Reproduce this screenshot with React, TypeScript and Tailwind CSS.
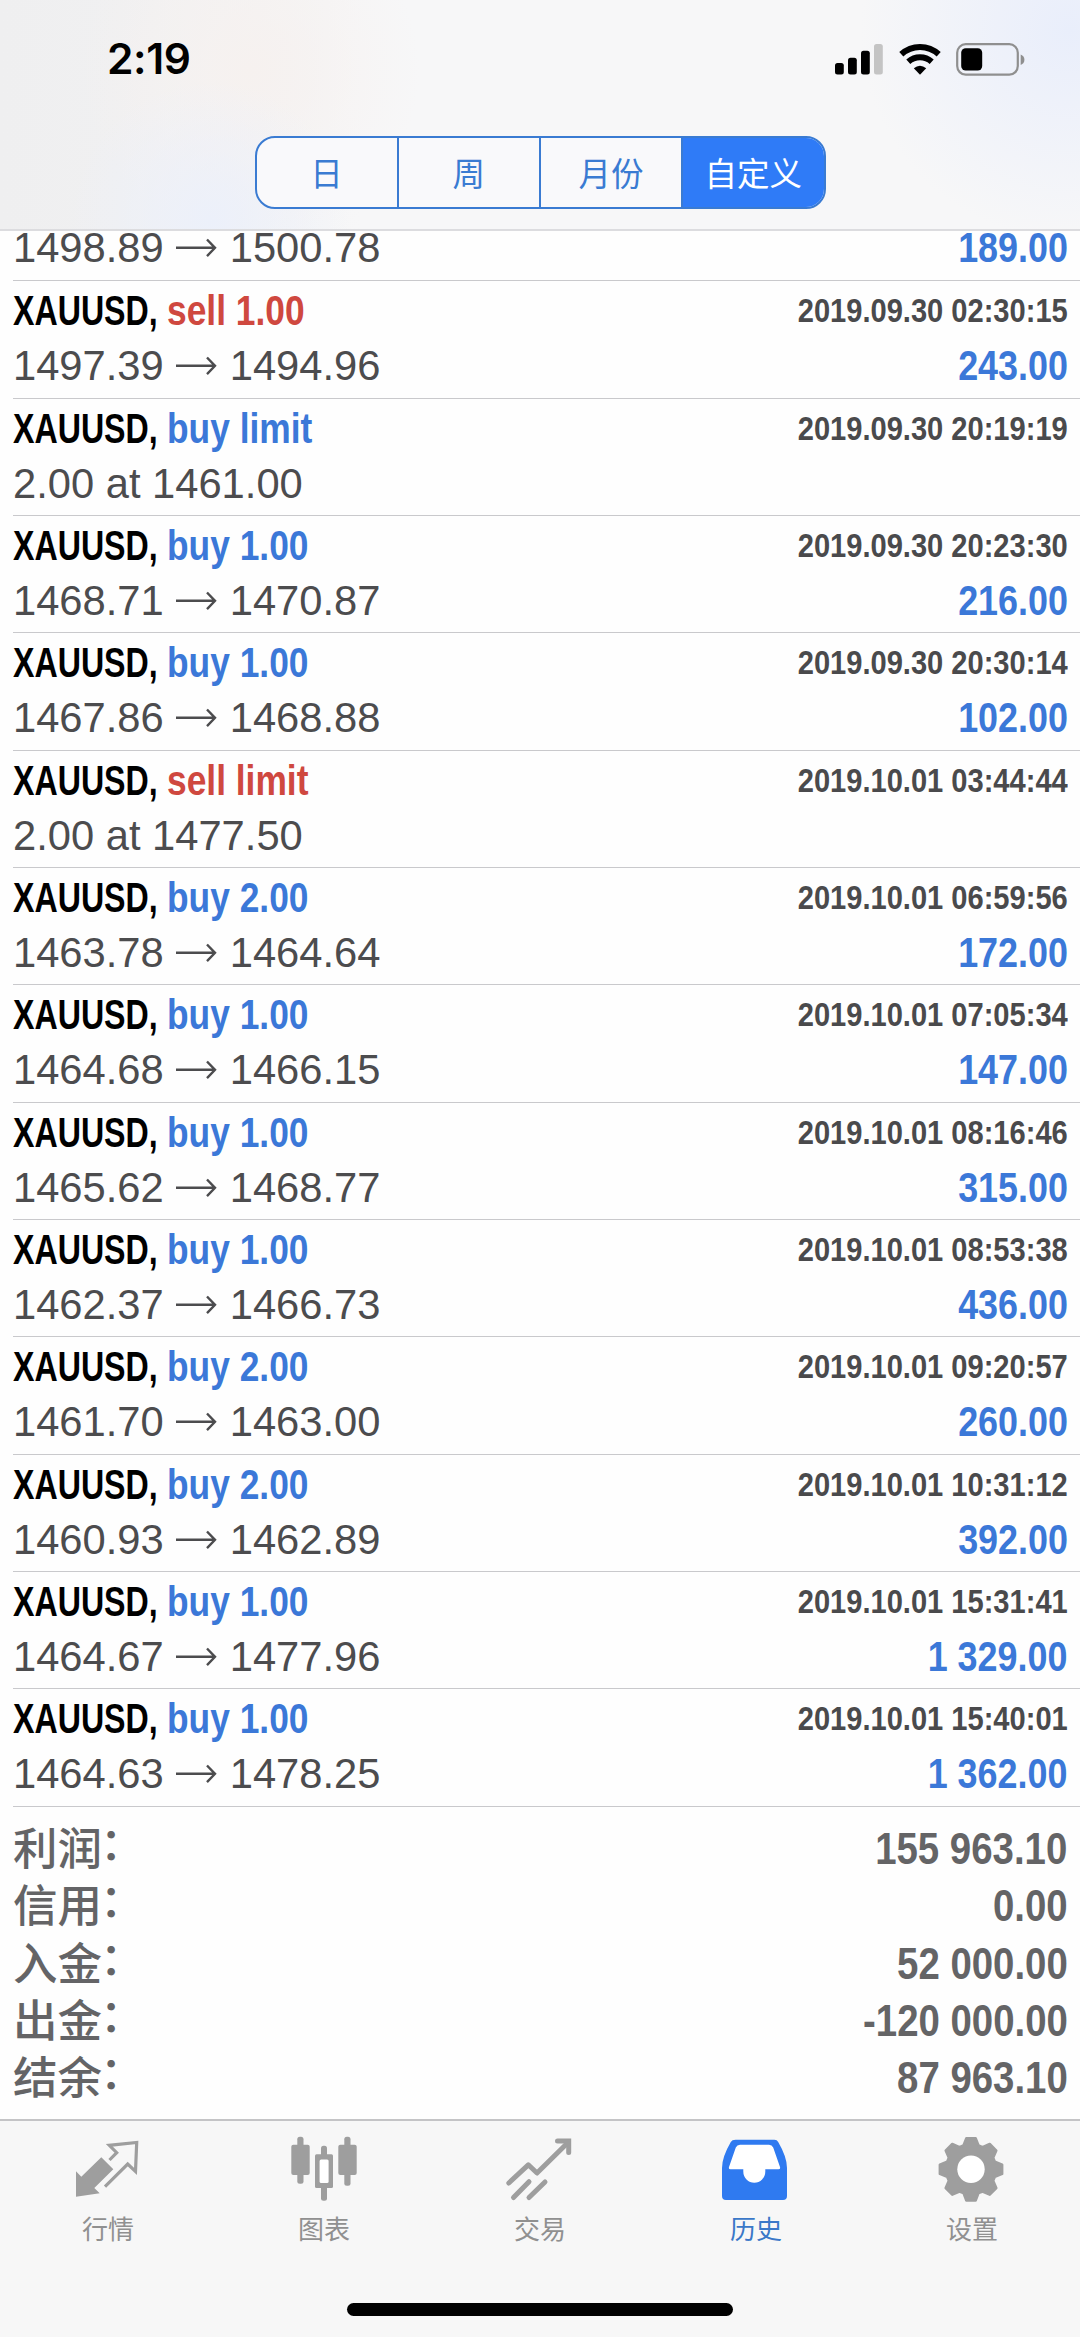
import React from 'react';
import { clsx } from 'clsx';

interface Deal {
  side: 'buy' | 'sell';
  label: string;
  time: string;
  open?: string;
  close?: string;
  order?: string;
  profit?: string;
}

const DEALS: Deal[] = [
  { side: 'sell', label: 'sell 1.00', time: '2019.09.30 02:30:15', open: '1497.39', close: '1494.96', profit: '243.00' },
  { side: 'buy', label: 'buy limit', time: '2019.09.30 20:19:19', order: '2.00 at 1461.00' },
  { side: 'buy', label: 'buy 1.00', time: '2019.09.30 20:23:30', open: '1468.71', close: '1470.87', profit: '216.00' },
  { side: 'buy', label: 'buy 1.00', time: '2019.09.30 20:30:14', open: '1467.86', close: '1468.88', profit: '102.00' },
  { side: 'sell', label: 'sell limit', time: '2019.10.01 03:44:44', order: '2.00 at 1477.50' },
  { side: 'buy', label: 'buy 2.00', time: '2019.10.01 06:59:56', open: '1463.78', close: '1464.64', profit: '172.00' },
  { side: 'buy', label: 'buy 1.00', time: '2019.10.01 07:05:34', open: '1464.68', close: '1466.15', profit: '147.00' },
  { side: 'buy', label: 'buy 1.00', time: '2019.10.01 08:16:46', open: '1465.62', close: '1468.77', profit: '315.00' },
  { side: 'buy', label: 'buy 1.00', time: '2019.10.01 08:53:38', open: '1462.37', close: '1466.73', profit: '436.00' },
  { side: 'buy', label: 'buy 2.00', time: '2019.10.01 09:20:57', open: '1461.70', close: '1463.00', profit: '260.00' },
  { side: 'buy', label: 'buy 2.00', time: '2019.10.01 10:31:12', open: '1460.93', close: '1462.89', profit: '392.00' },
  { side: 'buy', label: 'buy 1.00', time: '2019.10.01 15:31:41', open: '1464.67', close: '1477.96', profit: '1 329.00' },
  { side: 'buy', label: 'buy 1.00', time: '2019.10.01 15:40:01', open: '1464.63', close: '1478.25', profit: '1 362.00' },
];

const SUMMARY = [
  { label: '利润', value: '155 963.10' },
  { label: '信用', value: '0.00' },
  { label: '入金', value: '52 000.00' },
  { label: '出金', value: '-120 000.00' },
  { label: '结余', value: '87 963.10' },
];

const PERIODS = ['日', '周', '月份', '自定义'];

const rad = (deg: number) => (deg * Math.PI) / 180;

// Eight teeth, four points per tooth
const GEAR_POINTS = Array.from({ length: 8 }, (_, i) =>
  [[-17.5, 25], [-8.5, 31.5], [8.5, 31.5], [17.5, 25]]
    .map(([a, r]) => `${(32 + r * Math.sin(rad(i * 45 + a))).toFixed(2)},${(33.3 - r * Math.cos(rad(i * 45 + a))).toFixed(2)}`)
    .join(' ')
).join(' ');

const QuotesIcon = () => (
  <svg viewBox="0 0 66 66" className="size-[66px] overflow-visible">
    <path d="M1 60.7V35.3L6.3 40.7 26.3 21.3 38.3 33.3 19.3 52 24.7 57.3Z" fill="currentColor" />
    <path d="M34.5 24 41.7 16.7 34.3 9.3 61.7 6.5 60.5 35.5 52.7 28 30 50.7" fill="none" stroke="currentColor" strokeWidth="3.2" />
  </svg>
);

const ChartIcon = () => (
  <svg viewBox="0 0 66 66" className="size-[66px] overflow-visible" fill="currentColor">
    <rect x="0.3" y="8.7" width="18.4" height="30.3" rx="2" />
    <rect x="6.3" y="0.7" width="6.2" height="47" rx="2.5" />
    <rect x="24" y="18.3" width="18" height="33.7" rx="1.5" />
    <rect x="30" y="9.7" width="6" height="55" rx="2.5" />
    <rect x="28.6" y="23.5" width="9" height="23.5" rx="1.5" fill="#fff" />
    <rect x="47.3" y="8.7" width="18.4" height="30.3" rx="2" />
    <rect x="53.3" y="0.7" width="6.2" height="49" rx="2.5" />
  </svg>
);

const TradeIcon = () => (
  <svg viewBox="0 0 66 66" className="size-[66px] overflow-visible" fill="none" stroke="currentColor" strokeWidth="5" strokeLinecap="round">
    <path d="M1.8 47 21.3 28.8 30 37 61 6.5" strokeLinejoin="round" />
    <path d="M50.5 5H61.7V16.5M6.5 61.5 22 45.7M22 61.5 38 46" />
  </svg>
);

const HistoryIcon = () => (
  <svg viewBox="0 0 66 66" className="size-[66px] overflow-visible">
    <path d="M12.5 3.8H51.5Q54 3.8 55.2 6Q64 21 64 32V60Q64 64 60 64H3Q-1 64-1 60V32Q-1 21 7.8 6Q9 3.8 12.5 3.8Z" fill="currentColor" />
    <path d="M17 8.7H46Q49 8.7 50.2 11.5L57 31Q57.6 33.3 55.5 33.3H42.3V35.5A11 11.2 0 0 1 20.3 35.5V33.3H7.5Q5.4 33.3 6 31L12.8 11.5Q14 8.7 17 8.7Z" fill="#fff" />
  </svg>
);

const SettingsIcon = () => (
  <svg viewBox="0 0 66 66" className="size-[66px] overflow-visible">
    <polygon points={GEAR_POINTS} fill="currentColor" stroke="currentColor" strokeWidth="2.5" strokeLinejoin="round" />
    <circle cx="32" cy="33.3" r="13.7" fill="#fff" />
  </svg>
);

const TABS = [
  { name: '行情', icon: <QuotesIcon /> },
  { name: '图表', icon: <ChartIcon /> },
  { name: '交易', icon: <TradeIcon /> },
  { name: '历史', icon: <HistoryIcon />, active: true },
  { name: '设置', icon: <SettingsIcon /> },
];

const StatusBar = () => (
  <div className="flex h-[118px] items-center justify-between pr-[55px] pl-[107px]">
    <span className="font-['Inter'] text-[42.5px] font-semibold tracking-[-0.4px] text-black">2:19</span>
    <div className="flex items-center">
      <svg viewBox="0 0 48 33" className="h-[33px] w-12">
        <rect x="0" y="20" width="8.8" height="11.5" rx="2.5" />
        <rect x="13" y="14.7" width="8.8" height="16.8" rx="2.5" />
        <rect x="26" y="7.7" width="8.8" height="23.8" rx="2.5" />
        <rect x="39" y="1" width="8.8" height="30.5" rx="2.5" fill="#c4c4c4" />
      </svg>
      <svg viewBox="0 0 42 33" className="ml-4 h-[33px] w-[42px]" fill="none" stroke="#000" strokeWidth="6">
        <path d="M2.3 11.3A27.5 27.5 0 0 1 39.7 11.3" />
        <path d="M9.3 18.8A17.5 17.5 0 0 1 32.7 18.8" />
        <path d="M21 31.7 14.8 25.3Q21 20.3 27.2 25.3Z" fill="#000" stroke="none" />
      </svg>
      <svg viewBox="0 0 69 33" className="ml-[15px] h-[33px] w-[69px]">
        <rect x="1.2" y="1.2" width="60.6" height="30.4" rx="8.5" fill="none" stroke="#8f8f8f" strokeWidth="2.2" />
        <rect x="5.2" y="5.2" width="21" height="22.4" rx="4.5" />
        <path d="M64.7 11.5Q68.4 13 68.4 16.8T64.7 22Z" fill="#8f8f8f" />
      </svg>
    </div>
  </div>
);

const PriceMove = ({ open, close }: { open?: string; close?: string }) => (
  <span className="flex items-center">
    {open}
    <svg viewBox="0 0 66 34" className="h-[34px] w-[66px]" fill="none" stroke="currentColor" strokeWidth="2.4">
      <path d="M12 16.8H50.5M43 8.5 51 16.8 43 25.1" />
    </svg>
    {close}
  </span>
);

const Profit = ({ value }: { value?: string }) => (
  <span className="origin-right scale-x-[0.845] text-[42.5px] font-bold text-[#3b78d8]">{value}</span>
);

const DealRow = ({ deal }: { deal: Deal }) => (
  <div className="ml-[13px] h-[117.35px] shrink-0 border-b-[1.5px] border-[#c9c9cc] pt-0.5 pr-[12.5px]">
    <div className="flex h-14 justify-between leading-[55px]">
      <div className="flex text-[42.6px] font-bold">
        <span className="w-[154px] text-black">
          <span className="inline-block origin-left scale-x-[0.755]">XAUUSD,</span>
        </span>
        <span className={clsx('origin-left scale-x-[0.83]', deal.side === 'buy' ? 'text-[#3b78d8]' : 'text-[#cf483f]')}>{deal.label}</span>
      </div>
      <span className="origin-right scale-x-[0.855] text-[34px] leading-[54px] font-bold text-[#4a4a4c]">{deal.time}</span>
    </div>
    <div className="flex h-[54px] justify-between text-[41.7px] leading-[54px] text-[#4c4c4e]">
      {deal.order ? <span>{deal.order}</span> : <PriceMove open={deal.open} close={deal.close} />}
      <Profit value={deal.profit} />
    </div>
  </div>
);

export default function App() {
  return (
    <div className="flex h-[2337px] w-[1080px] flex-col overflow-hidden bg-[#fefefe] font-['Liberation_Sans','Noto_Sans_CJK_SC',sans-serif] whitespace-nowrap">
      <header className="h-[231px] shrink-0 border-b-2 border-[#dcdcdf] bg-[#f7f7f8] bg-[radial-gradient(circle_at_210px_220px,#ecf0fa_0,transparent_140px),radial-gradient(circle_at_250px_70px,#f6f1ef_0,transparent_170px),radial-gradient(circle_at_1070px_30px,#e9eefb_0,transparent_210px),linear-gradient(90deg,#efeff0_0,#f0f0f1_120px,#f7f7f8_360px)]">
        <StatusBar />
        <div className="mx-auto mt-[18px] flex h-[73px] w-[571px] overflow-hidden rounded-[20px] border-2 border-[#3a7bd2] bg-[#f9f9fb] font-['Noto_Sans_CJK_SC',sans-serif] text-[32.5px] text-[#3a7bd2]">
          {PERIODS.map((period, i) => (
            <div
              key={period}
              className={clsx(
                'flex flex-1 items-center justify-center',
                i > 0 && 'border-l-2 border-[#3a7bd2]',
                i === 3 && 'bg-[#2f7bf7] text-white'
              )}
            >
              {period}
            </div>
          ))}
        </div>
      </header>

      <main className="flex grow flex-col">
        {/* Row scrolled partly under the header */}
        <div className="ml-[13px] flex h-[50.3px] shrink-0 items-start justify-between border-b-[1.5px] border-[#c9c9cc] pr-[12.5px] text-[41.7px] leading-[34px] text-[#4c4c4e]">
          <PriceMove open="1498.89" close="1500.78" />
          <Profit value="189.00" />
        </div>

        {DEALS.map((deal) => (
          <DealRow key={deal.time} deal={deal} />
        ))}

        <div className="pt-3 pr-[12.5px] pl-[13px] font-bold text-[#646466]">
          {SUMMARY.map((row) => (
            <div key={row.label} className="flex h-[57.4px] justify-between">
              <span className="flex font-['Noto_Sans_CJK_SC',sans-serif] text-[44.5px] leading-[54px] font-medium">
                {row.label}
                <span className="-ml-0.5 pb-2 leading-[43px]">：</span>
              </span>
              <span className="origin-right scale-x-[0.872] text-[44px] leading-[60px]">{row.value}</span>
            </div>
          ))}
        </div>
      </main>

      <footer className="h-[218px] shrink-0 border-t-2 border-[#c4c4c6] bg-[#f7f7f7]">
        <nav className="flex h-[182px] pt-[15px]">
          {TABS.map((tab) => (
            <div key={tab.name} className={clsx('flex flex-1 flex-col items-center', tab.active ? 'text-[#2f7af0]' : 'text-[#9e9e9e]')}>
              {tab.icon}
              <span className={clsx("mt-[7px] font-['Noto_Sans_CJK_SC',sans-serif] text-[26px] leading-[38px]", tab.active ? 'text-[#3a78c8]' : 'text-[#909090]')}>{tab.name}</span>
            </div>
          ))}
        </nav>
        <div className="mx-auto h-[13px] w-[386px] rounded-full bg-black" />
      </footer>
    </div>
  );
}
